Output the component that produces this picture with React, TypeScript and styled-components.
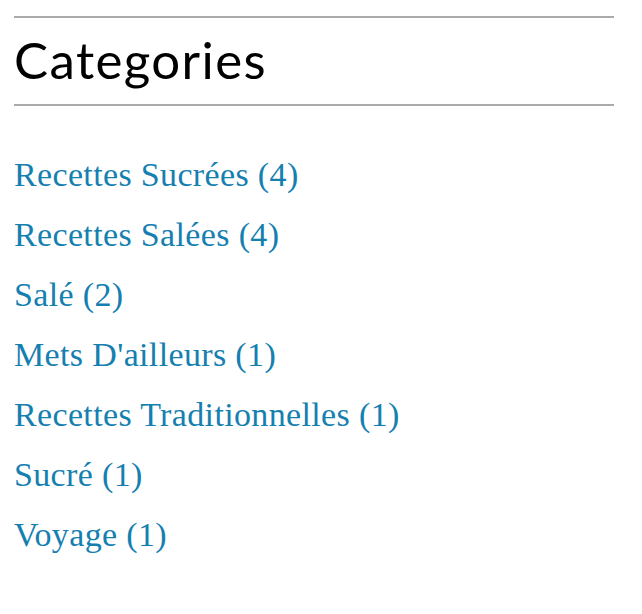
import React from "react";
import styled, { createGlobalStyle } from "styled-components";

const Global = createGlobalStyle`
  html, body { margin: 0; padding: 0; background: #fff; }
`;

const Widget = styled.aside`
  width: 600px;
  margin-left: 14px;
  padding-top: 16px;
`;

const Title = styled.h2`
  margin: 0;
  padding-bottom: 2px;
  border-top: 2px solid #aaaaaa;
  border-bottom: 2px solid #aaaaaa;
  font-family: "Lato", "Open Sans", sans-serif;
  font-weight: 400;
  font-size: 51px;
  line-height: 84px;
  height: 84px;
  color: #000;
  letter-spacing: 1.4px;
`;

const List = styled.ul`
  list-style: none;
  margin: 0;
  padding: 39px 0 0 0;
`;

const Item = styled.li`
  font-family: "Liberation Serif", "Times New Roman", serif;
  font-size: 34px;
  line-height: 60px;
  letter-spacing: 0.35px;
`;

const Link = styled.a`
  color: #1580b0;
  text-decoration: none;
`;

const cats = [
  ["Recettes Sucrées", 4],
  ["Recettes Salées", 4],
  ["Salé", 2],
  ["Mets D'ailleurs", 1],
  ["Recettes Traditionnelles", 1],
  ["Sucré", 1],
  ["Voyage", 1],
] as const;

export default function App() {
  return (
    <>
      <Global />
      <Widget>
        <Title>Categories</Title>
        <List>
          {cats.map(([name, n]) => (
            <Item key={name}>
              <Link href="#">
                {name} ({n})
              </Link>
            </Item>
          ))}
        </List>
      </Widget>
    </>
  );
}
